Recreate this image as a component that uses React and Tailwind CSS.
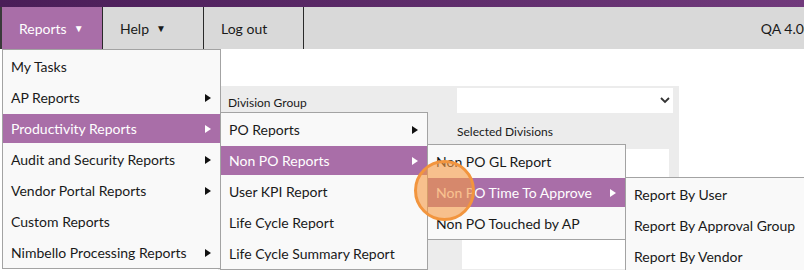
import React from 'react';

const font = { fontFamily: 'Lato, "Noto Sans", Arial, sans-serif' };

function Arrow({ light }) {
  return (
    <svg width="6" height="8" viewBox="0 0 6 8" className="shrink-0">
      <path d="M0 0 L6 4 L0 8 Z" fill={light ? '#ffffff' : '#111111'} />
    </svg>
  );
}

function MenuItem({ label, sub, active }) {
  return (
    <div
      className={`h-[29px] flex items-center justify-between pl-[8px] pr-[9px] text-[14px] whitespace-nowrap ${
        active ? 'bg-[#a96ea8] text-white' : 'text-[#1a1a1a]'
      }`}
    >
      <span>{label}</span>
      {sub && <Arrow light={active} />}
    </div>
  );
}

function Menu({ className, items }) {
  return (
    <div className={`absolute bg-[#f9f9f9] border border-[#a3a3a3] pt-[2px] pb-[1px] flex flex-col gap-[2px] ${className}`}>
      {items.map((it) => (
        <MenuItem key={it.label} {...it} />
      ))}
    </div>
  );
}

export default function App() {
  return (
    <div className="relative w-[804px] h-[270px] overflow-hidden bg-white" style={font}>
      {/* top stripe */}
      <div className="h-[7px] bg-gradient-to-r from-[#4a1d58] to-[#713a7c]" />

      {/* nav */}
      <div className="h-[42px] bg-[#d9d9d9] flex items-stretch border-l-2 border-[#3a3a3a] text-[14px]">
        <div className="w-[100px] bg-[#a96ea8] text-white flex items-center pl-[17px] gap-[7px]">
          Reports <span className="text-[10px]">▼</span>
        </div>
        <div className="w-[101px] border-l border-[#2a2a2a] flex items-center pl-[17px] gap-[7px] text-[#1a1a1a]">
          Help <span className="text-[10px]">▼</span>
        </div>
        <div className="w-[101px] border-l border-[#2a2a2a] border-r flex items-center pl-[17px] text-[#1a1a1a]">
          Log out
        </div>
        <div className="flex-1 flex items-center justify-end text-[14px] text-[#1a1a1a]">
          <span className="translate-x-[8px]">QA 4.00</span>
        </div>
      </div>

      {/* page content */}
      <div className="pl-[218px] pt-[37px]">
        <div className="w-[461px] h-[200px] bg-[#ececec] flex pt-[2px]">
          <div className="w-[239px] pl-[10px] pt-[6px] text-[12px] text-[#1a1a1a]">Division Group</div>
          <div className="w-[216px] flex flex-col">
            <div className="h-[25px] bg-white flex items-center justify-end pr-[3px]">
              <svg width="10" height="7" viewBox="0 0 10 7">
                <path d="M1 1 L5 5 L9 1" fill="none" stroke="#333" strokeWidth="1.8" />
              </svg>
            </div>
            <div className="pt-[10px] text-[12px] text-[#1a1a1a]">Selected Divisions</div>
            <div className="ml-[5px] mr-[4px] mt-[8px] h-[120px] bg-white" />
          </div>
        </div>
      </div>

      {/* menus */}
      <Menu
        className="left-[2px] top-[49px] w-[219px]"
        items={[
          { label: 'My Tasks' },
          { label: 'AP Reports', sub: true },
          { label: 'Productivity Reports', sub: true, active: true },
          { label: 'Audit and Security Reports', sub: true },
          { label: 'Vendor Portal Reports', sub: true },
          { label: 'Custom Reports' },
          { label: 'Nimbello Processing Reports', sub: true },
        ]}
      />
      <Menu
        className="left-[220px] top-[112px] w-[208px]"
        items={[
          { label: 'PO Reports', sub: true },
          { label: 'Non PO Reports', sub: true, active: true },
          { label: 'User KPI Report' },
          { label: 'Life Cycle Report' },
          { label: 'Life Cycle Summary Report' },
        ]}
      />
      <Menu
        className="left-[427px] top-[144px] w-[199px]"
        items={[
          { label: 'Non PO GL Report' },
          { label: 'Non PO Time To Approve', sub: true, active: true },
          { label: 'Non PO Touched by AP' },
        ]}
      />
      <Menu
        className="left-[625px] top-[177px] w-[200px]"
        items={[
          { label: 'Report By User' },
          { label: 'Report By Approval Group' },
          { label: 'Report By Vendor' },
        ]}
      />

      {/* click indicator */}
      <div className="absolute left-[414px] top-[160px] w-[61px] h-[61px] rounded-full bg-[#f59a45]/60 border-[3px] border-[#f2953e]" />
    </div>
  );
}
